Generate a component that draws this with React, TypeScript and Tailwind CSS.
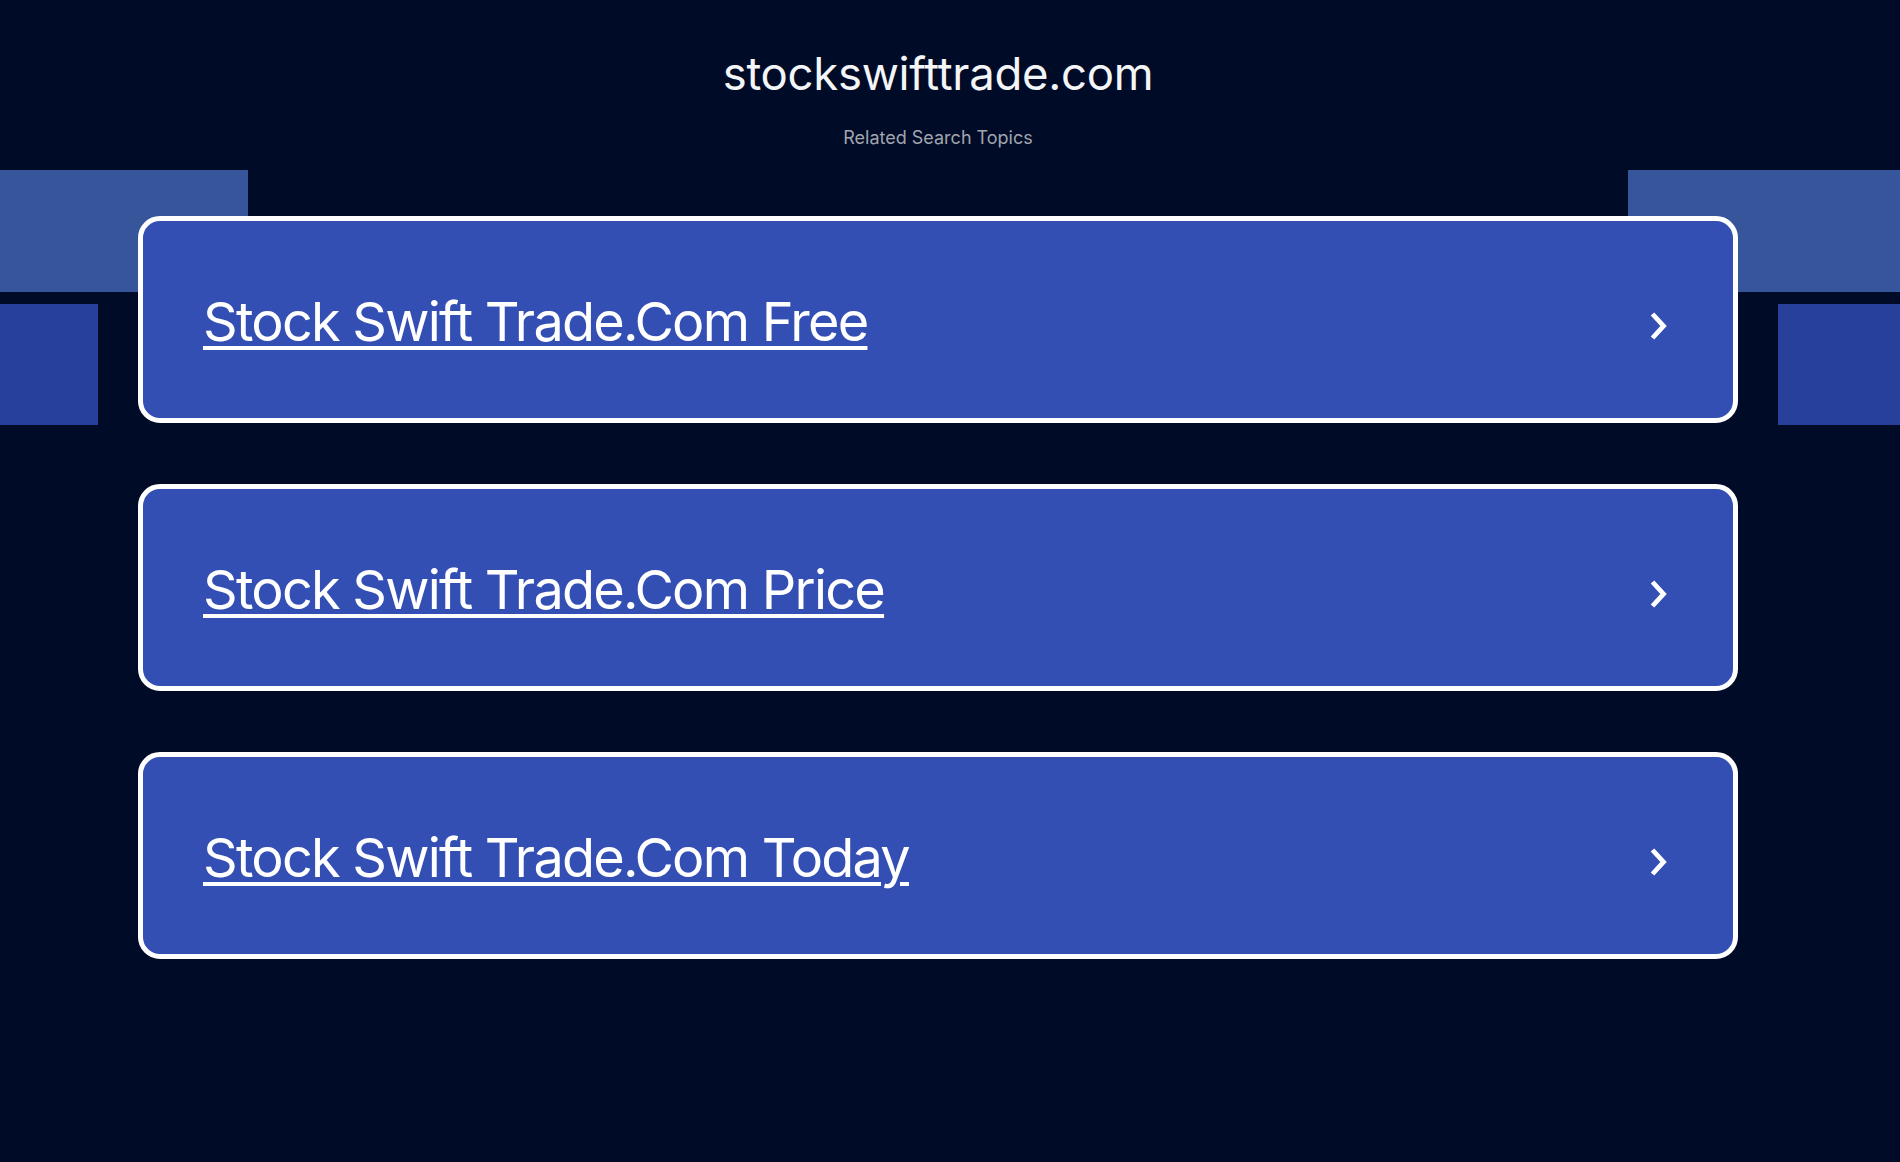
const TOPICS = [
  "Stock Swift Trade.Com Free",
  "Stock Swift Trade.Com Price",
  "Stock Swift Trade.Com Today",
];

export default function App() {
  return (
    <div
      className="relative min-h-[1162px] w-full overflow-hidden bg-[#000b27]"
      style={{ fontFamily: "Inter, 'Noto Sans', sans-serif" }}
    >
      {/* Decorative blocks */}
      <div className="absolute left-0 top-[170px] h-[122px] w-[248px] bg-[#36559b]" />
      <div className="absolute left-0 top-[304px] h-[121px] w-[98px] bg-[#27409a]" />
      <div className="absolute right-0 top-[170px] h-[122px] w-[272px] bg-[#36559b]" />
      <div className="absolute right-0 top-[304px] h-[121px] w-[122px] bg-[#27409a]" />

      <div className="relative flex flex-col items-center pr-[24px]">
        {/* Header */}
        <h1 className="mt-[48px] text-[45.5px] leading-[52px] font-normal text-[#f4f5f7] tracking-[-0.3px]">
          stockswifttrade.com
        </h1>
        <p className="mt-[25px] text-[18px] leading-[26px] text-[#a1a5ae]">
          Related Search Topics
        </p>

        {/* Topic cards */}
        <div className="mt-[65px] flex w-[1600px] flex-col gap-[61px]">
          {TOPICS.map((t) => (
            <a
              key={t}
              href="#"
              className="flex h-[207px] items-center justify-between rounded-[22px] border-[5px] border-white bg-[#334fb4] pl-[60px] pr-[66px] text-white"
            >
              <span className="pt-[3px] text-[54px] leading-[55px] underline decoration-4 underline-offset-[5px] tracking-[-1.75px]">
                {t}
              </span>
              <IcoChevron className="mt-[12px] h-[28px] w-[17px]" />
            </a>
          ))}
        </div>
      </div>
    </div>
  );
}

function IcoChevron(p: React.SVGProps<SVGSVGElement>) {
  return (
    <svg {...p} viewBox="0 0 17 28" fill="none" stroke="white" strokeWidth="4.8" strokeLinejoin="miter">
      <path d="M2.5 2L13.5 14 2.5 26" />
    </svg>
  );
}
